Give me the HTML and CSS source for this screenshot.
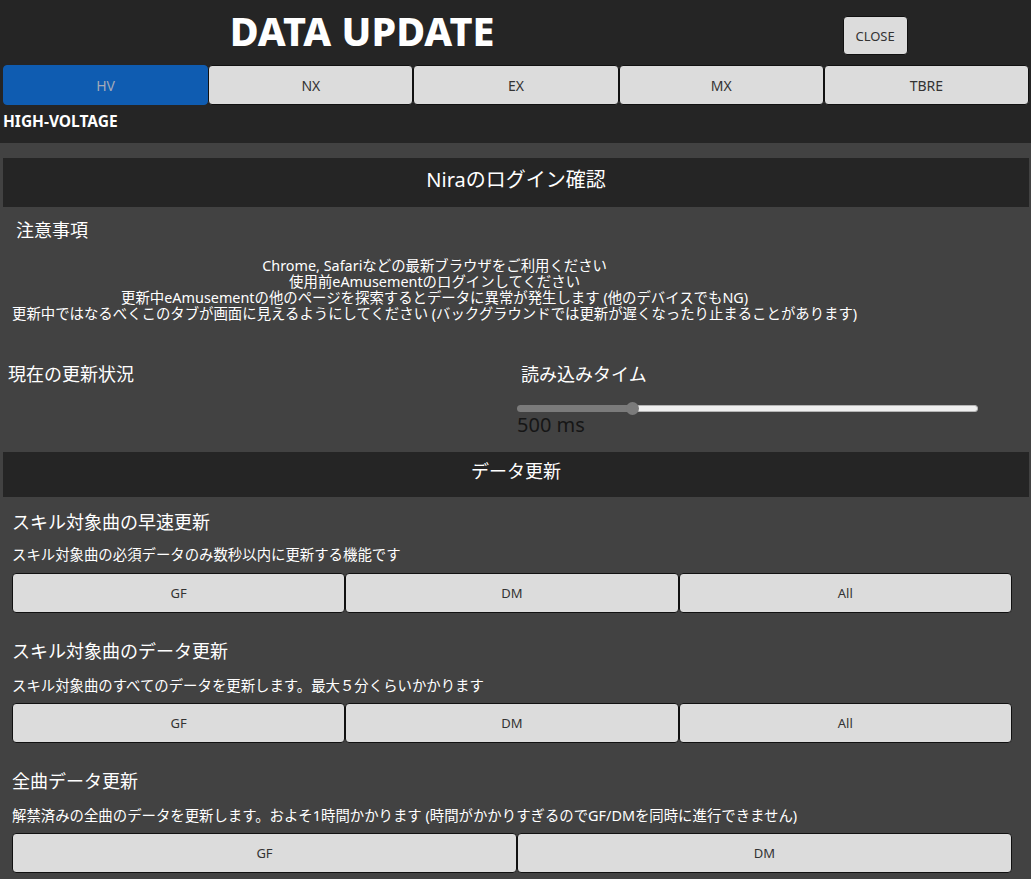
FILE: index.html
```html
<!DOCTYPE html>
<html lang="ja">
<head>
<meta charset="utf-8">
<title>DATA UPDATE</title>
<link rel="stylesheet" href="styles.css">
</head>
<body>
<header class="top">
  <div class="title-row">
    <h1 class="title">DATA UPDATE</h1>
    <div class="close-wrap"><button class="close">CLOSE</button></div>
  </div>
  <nav class="tabs">
    <button class="tab active">HV</button>
    <button class="tab">NX</button>
    <button class="tab">EX</button>
    <button class="tab">MX</button>
    <button class="tab">TBRE</button>
  </nav>
  <div class="game-name">HIGH-VOLTAGE</div>
</header>
<main class="content">
  <div class="bar bar-login">Niraのログイン確認</div>
  <h2 class="notice-title">注意事項</h2>
  <div class="notes">
    Chrome, Safariなどの最新ブラウザをご利用ください<br>
    使用前eAmusementのログインしてください<br>
    更新中eAmusementの他のページを探索するとデータに異常が発生します (他のデバイスでもNG)<br>
    更新中ではなるべくこのタブが画面に見えるようにしてください (バックグラウンドでは更新が遅くなったり止まることがあります)
  </div>
  <div class="status-row">
    <div class="status-col">
      <h2 class="col-title">現在の更新状況</h2>
    </div>
    <div class="timer-col">
      <h2 class="col-title timer-title">読み込みタイム</h2>
      <div class="slider">
        <div class="slider-fill"></div>
        <div class="slider-thumb"></div>
        <div class="slider-rest"></div>
      </div>
      <div class="ms">500 ms</div>
    </div>
  </div>
  <div class="bar bar-data">データ更新</div>
  <section class="update">
    <h3 class="update-title">スキル対象曲の早速更新</h3>
    <p class="update-desc">スキル対象曲の必須データのみ数秒以内に更新する機能です</p>
    <div class="btn-row">
      <button class="btn">GF</button><button class="btn">DM</button><button class="btn">All</button>
    </div>
  </section>
  <section class="update">
    <h3 class="update-title">スキル対象曲のデータ更新</h3>
    <p class="update-desc">スキル対象曲のすべてのデータを更新します。最大５分くらいかかります</p>
    <div class="btn-row">
      <button class="btn">GF</button><button class="btn">DM</button><button class="btn">All</button>
    </div>
  </section>
  <section class="update">
    <h3 class="update-title">全曲データ更新</h3>
    <p class="update-desc">解禁済みの全曲のデータを更新します。およそ1時間かかります (時間がかかりすぎるのでGF/DMを同時に進行できません)</p>
    <div class="btn-row">
      <button class="btn btn-wide">GF</button><button class="btn btn-narrow">DM</button>
    </div>
  </section>
</main>
</body>
</html>
```

FILE: styles.css
```css
html, body {
  margin: 0;
  padding: 0;
}
body {
  background: #424242;
  color: #ffffff;
  font-family: "Noto Sans", "Noto Sans CJK JP", sans-serif;
  overflow: hidden;
}
.top {
  background: #252525;
  padding: 0 2px 0 3px;
  height: 143px;
  box-sizing: border-box;
}
.title-row {
  display: flex;
  height: 65px;
  align-items: center;
}
.title {
  flex: 7;
  margin: 0;
  text-align: center;
  font-size: 39.5px;
  font-weight: 800;
  line-height: 1;
  padding-bottom: 2px;
}
.close-wrap {
  flex: 3;
  display: flex;
  justify-content: center;
  align-self: flex-start;
  padding-top: 16px;
}
.close {
  width: 65px;
  height: 39px;
  background: #dcdcdc;
  border: 1px solid #111;
  border-radius: 4px;
  color: #333;
  font-family: "Noto Sans", sans-serif;
  font-size: 13px;
  padding: 0;
}
.tabs {
  display: flex;
  height: 40px;
}
.tab {
  flex: 1;
  background: #dcdcdc;
  border: 1px solid #111;
  border-radius: 4px;
  color: #333;
  font-family: "Noto Sans", sans-serif;
  font-size: 14px;
  padding: 0;
}
.tab.active {
  background: #0f5cb1;
  border-color: #0f5cb1;
  color: #a3aab8;
}
.game-name {
  font-weight: 700;
  font-size: 15.5px;
  margin-top: 6px;
  line-height: 20px;
}
.content {
  padding: 15px 2px 0 3px;
}
.bar {
  background: #252525;
  display: flex;
  align-items: center;
  justify-content: center;
}
.bar-login {
  height: 49px;
  box-sizing: border-box;
  padding-bottom: 9px;
  font-size: 20px;
}
.notice-title {
  margin: 12px 0 0 13px;
  font-size: 18px;
  font-weight: 400;
  line-height: 22px;
}
.notes {
  display: inline-block;
  margin: 17px 0 0 9px;
  text-align: center;
  font-size: 14.4px;
  line-height: 16px;
}
.status-row {
  display: grid;
  grid-template-columns: 514px 1fr;
  margin-top: 39px;
}
.col-title {
  margin: 0;
  font-size: 18px;
  font-weight: 400;
  line-height: 22px;
}
.status-col {
  padding-left: 5px;
}
.timer-title {
  padding-left: 4px;
}
.slider {
  display: flex;
  align-items: center;
  width: 461px;
  height: 13px;
  margin-top: 17px;
}
.slider-fill {
  width: 112px;
  height: 7px;
  background: #7b7b7b;
  border-radius: 4px 0 0 4px;
}
.slider-thumb {
  width: 13px;
  height: 13px;
  border-radius: 50%;
  background: #7b7b7b;
  margin: 0 -3px;
  position: relative;
}
.slider-rest {
  flex: 1;
  height: 5px;
  background: #efefef;
  border: 1px solid #b5b5b5;
  border-left: none;
  border-radius: 0 4px 4px 0;
}
.ms {
  color: #161616;
  font-size: 20px;
  font-weight: 400;
  line-height: 20px;
  margin-top: 0;
}
.bar-data {
  height: 45px;
  box-sizing: border-box;
  padding-bottom: 9px;
  font-size: 18px;
  margin-top: 17px;
}
.update {
  padding: 0 17px 0 9px;
}
.update-title {
  margin: 25px 0 0;
  font-size: 18px;
  font-weight: 400;
  line-height: 26px;
}
.update-desc {
  margin: 13px 0 0;
  font-size: 14.4px;
  line-height: 18px;
}
.btn-row {
  display: flex;
  margin-top: 8px;
  height: 40px;
}
.bar-data + .update .update-title {
  margin-top: 12px;
}
.bar-data + .update .update-desc {
  margin-top: 11px;
}
.bar-data + .update .btn-row {
  margin-top: 9px;
}
.btn {
  flex: 1;
  height: 40px;
  background: #dcdcdc;
  border: 1px solid #111;
  border-radius: 4px;
  color: #333;
  font-family: "Noto Sans", sans-serif;
  font-size: 13px;
  padding: 0;
}
.btn-wide {
  flex: 505;
}
.btn-narrow {
  flex: 495;
}
```
